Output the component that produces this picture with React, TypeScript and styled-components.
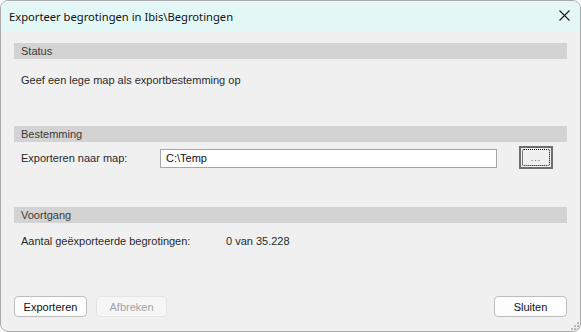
import styled, { createGlobalStyle } from 'styled-components'

const GlobalStyle = createGlobalStyle`
  html, body {
    margin: 0;
    padding: 0;
    background: #ffffff;
  }
  * {
    box-sizing: border-box;
  }
`

function App() {
  return (
    <>
      <GlobalStyle />
      <Window>
        <TitleBar>
          <Title>Exporteer begrotingen in Ibis\Begrotingen</Title>
          <CloseButton>
            <svg width="11" height="11" viewBox="0 0 11 11">
              <path d="M0.5 0.5 L10.5 10.5 M10.5 0.5 L0.5 10.5" stroke="#1b1b1b" strokeWidth="1.1" fill="none" />
            </svg>
          </CloseButton>
        </TitleBar>
        <Content>
          <SectionHeader $top={12}>Status</SectionHeader>
          <TextLine $top={15}>Geef een lege map als exportbestemming op</TextLine>

          <SectionHeader $top={39}>Bestemming</SectionHeader>
          <FieldRow>
            <Label $width={139}>Exporteren naar map:</Label>
            <PathInput value="C:\Temp" readOnly />
            <BrowseButton>
              <FocusRect>...</FocusRect>
            </BrowseButton>
          </FieldRow>

          <SectionHeader $top={38}>Voortgang</SectionHeader>
          <InfoRow>
            <Label $width={205}>Aantal geëxporteerde begrotingen:</Label>
            <span>0 van 35.228</span>
          </InfoRow>

          <Footer>
            <ButtonGroup>
              <DialogButton>Exporteren</DialogButton>
              <DialogButton disabled>Afbreken</DialogButton>
            </ButtonGroup>
            <DialogButton>Sluiten</DialogButton>
          </Footer>
        </Content>
        <SizeGrip>
          <svg width="8" height="8" viewBox="0 0 8 8">
            <rect x="6" y="0" width="2" height="2" fill="#b8b8b8" />
            <rect x="3" y="3" width="2" height="2" fill="#b8b8b8" />
            <rect x="6" y="3" width="2" height="2" fill="#b8b8b8" />
            <rect x="0" y="6" width="2" height="2" fill="#b8b8b8" />
            <rect x="3" y="6" width="2" height="2" fill="#b8b8b8" />
            <rect x="6" y="6" width="2" height="2" fill="#b8b8b8" />
          </svg>
        </SizeGrip>
      </Window>
    </>
  )
}

const Window = styled.div`
  position: relative;
  width: 581px;
  height: 332px;
  border: 1px solid #ababab;
  border-radius: 8px;
  overflow: hidden;
  background: #f0f0f0;
  display: flex;
  flex-direction: column;
  font-family: "Liberation Sans", Arial, sans-serif;
  font-size: 11px;
  color: #1e1e1e;
`

const TitleBar = styled.div`
  height: 30px;
  flex: none;
  background: #e3f7f7;
  display: flex;
  align-items: center;
  justify-content: space-between;
  padding: 0 10px 0 8px;
`

const Title = styled.div`
  font-family: "Noto Sans", "Open Sans", sans-serif;
  font-size: 11.2px;
  color: #111;
`

const CloseButton = styled.div`
  display: flex;
  width: 11px;
  height: 11px;
  margin-top: -1px;
`

const Content = styled.div`
  flex: 1;
  display: flex;
  flex-direction: column;
  padding: 0 13px 14px 13px;
`

const SectionHeader = styled.div<{ $top: number }>`
  margin-top: ${p => p.$top}px;
  height: 16px;
  line-height: 16px;
  background: #d3d3d3;
  padding-left: 7px;
  color: #3a3a3a;
`

const TextLine = styled.div<{ $top: number }>`
  margin-top: ${p => p.$top}px;
  line-height: 13px;
  padding-left: 7px;
  color: #2a2a2a;
`

const FieldRow = styled.div`
  margin-top: 4px;
  height: 23px;
  display: flex;
  align-items: center;
  padding-left: 7px;
  padding-right: 14px;
`

const InfoRow = styled.div`
  margin-top: 12px;
  line-height: 13px;
  display: flex;
  padding-left: 7px;
  color: #2a2a2a;
`

const Label = styled.span<{ $width: number }>`
  width: ${p => p.$width}px;
  flex: none;
  color: #2a2a2a;
`

const PathInput = styled.input`
  width: 337px;
  height: 19px;
  margin-top: 1px;
  border: 1px solid #a6a6a6;
  background: #ffffff;
  font-family: "Liberation Sans", Arial, sans-serif;
  font-size: 11px;
  color: #111;
  padding: 0 0 0 5px;
  outline: none;
`

const BrowseButton = styled.div`
  margin-left: auto;
  width: 34px;
  height: 23px;
  border: 2px solid #6e6e6e;
  background: #f0f0f0;
  padding: 1px;
`

const FocusRect = styled.div`
  width: 100%;
  height: 100%;
  border: 1px dotted #000;
  border-radius: 2px;
  font-size: 9px;
  line-height: 9px;
  letter-spacing: 1px;
  color: #6b4f8a;
  display: flex;
  align-items: flex-end;
  justify-content: center;
  padding-bottom: 2px;
`

const Footer = styled.div`
  margin-top: auto;
  display: flex;
  justify-content: space-between;
  align-items: center;
`

const ButtonGroup = styled.div`
  display: flex;
  gap: 9px;
`

const DialogButton = styled.button`
  width: 73px;
  height: 21px;
  border: 1px solid #bdbdbd;
  border-radius: 4px;
  background: #fdfdfd;
  font-family: "Liberation Sans", Arial, sans-serif;
  font-size: 11px;
  color: #111;
  padding: 0;

  &:disabled {
    width: 71px;
    border-color: #e4e4e4;
    background: #f6f6f6;
    color: #a3a3a3;
  }
`

const SizeGrip = styled.div`
  position: absolute;
  right: 1px;
  bottom: 1px;
  display: flex;
`

export default App
